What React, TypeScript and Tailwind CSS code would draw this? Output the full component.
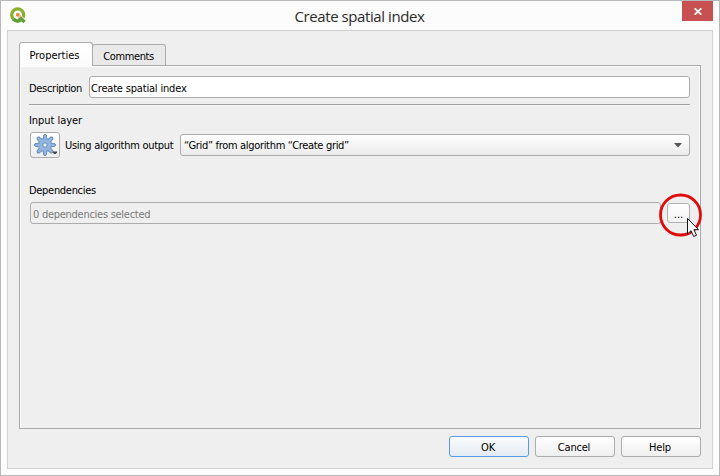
import type { ReactNode } from "react";

function Logo() {
  return (
    <svg width="18" height="18" viewBox="0 0 18 18" className="shrink-0">
      <circle cx="7.7" cy="7.9" r="6" fill="none" stroke="#86b02c" strokeWidth="3.2" />
      <path d="M3.4 12.2A6 6 0 0 0 10 13.5" fill="none" stroke="#5b9d38" strokeWidth="3.2" />
      <path d="M10.4 8.8L15.6 13.6" stroke="#fcfcfc" strokeWidth="1.4" />
      <path d="M9.3 10L14.6 15" stroke="#63a03a" strokeWidth="3.4" />
      <path d="M6 6.2H9.3L11.4 9.3L9.4 11L6 9Z" fill="#f8b878" />
      <path d="M6.4 6.5H9V9H6.4Z" fill="#ee7a35" />
    </svg>
  );
}

const teeth = [0, 45, 90, 135, 180, 225, 270, 315];

function Gear() {
  return (
    <svg width="24" height="24" viewBox="0 0 24 24">
      {teeth.map((a) => (
        <path key={a} d="M10.2 6L10.6 2.2Q12 .5 13.4 2.2L13.8 6" transform={`rotate(${a} 12 12)`} fill="#92b5df" stroke="#6089b9" strokeWidth="1" />
      ))}
      <circle cx="12" cy="12" r="6.4" fill="#92b5df" stroke="#6089b9" strokeWidth="0.9" />
      {teeth.map((a) => (
        <path key={a} d="M10.8 7V2.7H13.2V7Z" transform={`rotate(${a} 12 12)`} fill="#92b5df" />
      ))}
      <circle cx="12" cy="12" r="2.2" fill="#f0f3f7" stroke="#6089b9" strokeWidth="1" />
      <path d="M19.5 18.5H24V19.5L22.8 21H21Z" fill="#444" />
    </svg>
  );
}

function DialogButton({ children, primary }: { children: ReactNode; primary?: boolean }) {
  return (
    <button
      className={
        "flex h-[21px] w-20 items-center justify-center rounded-[3px] border pt-[2px] pr-[2px] tracking-[-0.2px] " +
        (primary
          ? "border-[#569de5] bg-linear-to-b from-[#fbfcfd] to-[#e4ebf3]"
          : "border-[#acacac] bg-linear-to-b from-white to-[#efefef]")
      }
    >
      {children}
    </button>
  );
}

export default function App() {
  return (
    <div className="relative flex h-[476px] w-[720px] flex-col border border-[#b9b9b9] bg-[#fcfcfc] px-1.5 pb-1.5 font-['DejaVu_Sans_Condensed','DejaVu_Sans',sans-serif] text-[11px] leading-[14px] text-black [font-stretch:condensed]">
      <header className="flex h-[29px] shrink-0 items-start">
        <div className="w-[30px] pt-1.5 pl-[3px]"><Logo /></div>
        <h1 className="flex-1 pt-[5px] text-center font-['Open_Sans',sans-serif] text-[15px] leading-5 tracking-[-0.42px] text-[#2b2b2b] [font-stretch:normal]">
          Create spatial index
        </h1>
        <button className="flex h-5 w-[31px] items-center justify-center bg-[#c75050]">
          <svg width="8" height="7" viewBox="0 0 8 7"><path d="M.7 .3L7.3 6.7M7.3 .3L.7 6.7" stroke="white" strokeWidth="1.7" /></svg>
        </button>
      </header>

      <main className="flex flex-1 flex-col border border-[#d2d2d2] bg-[#efefef] px-[11px] pt-[11px] pb-[11px]">
        <div className="z-10 -mb-px flex h-6 shrink-0 items-end">
          <div className="flex h-6 w-[74px] justify-center rounded-t-[3px] border border-b-0 border-[#acacac] bg-linear-to-b from-white to-[#fbfbfb] pt-1.5 pr-[3px]">Properties</div>
          <div className="mb-px -ml-px flex h-[21px] w-[74px] justify-center rounded-t-[3px] border border-b-0 border-[#acacac] bg-[#e9e9e9] pt-[5px] pr-px tracking-[-0.38px]">Comments</div>
        </div>

        <section className="flex h-[364px] w-[682px] shrink-0 flex-col border border-[#a9a9a9] pt-2.5 pr-2.5 pl-[9px] shadow-[inset_1px_1px_0_#fcfcfc,inset_-1px_0_0_#fcfcfc]">
          <div className="flex h-[22px] items-center">
            <label className="w-[60px] pt-[3px] tracking-[-0.3px]">Description</label>
            <div className="flex h-[22px] flex-1 items-center rounded-[3px] border border-[#acacac] bg-white pt-[3px] pl-px tracking-[-0.18px]">Create spatial index</div>
          </div>
          <div className="mt-1.5 h-px bg-[#a0a0a0] shadow-[0_1px_0_#f8f8f8]" />

          <div className="mt-2 h-[14px] pt-px tracking-[-0.05px]">Input layer</div>
          <div className="mt-[5px] flex h-[26px] items-center">
            <button className="ml-px flex h-[26px] w-[30px] shrink-0 items-center justify-center rounded-[3px] border border-[#acacac] bg-linear-to-b from-white to-[#eeeeee]"><Gear /></button>
            <span className="ml-[5px] w-[115px] pt-[2px] tracking-[-0.27px] whitespace-nowrap">Using algorithm output</span>
            <div className="flex h-[22px] flex-1 items-center justify-between rounded-[3px] border border-[#acacac] bg-linear-to-b from-white to-[#ebebeb] pr-[7px] pl-[3px] tracking-[-0.32px]">
              <span className="pt-[2px]">“Grid” from algorithm “Create grid”</span>
              <svg width="8" height="5" viewBox="0 0 8 5"><path d="M0 0H8L4 4.5Z" fill="#555" /></svg>
            </div>
          </div>

          <div className="mt-6 h-[14px] pt-[2px] tracking-[-0.3px]">Dependencies</div>
          <div className="mt-[6px] flex h-[22px] items-center justify-between">
            <div className="ml-px flex h-[22px] w-[631px] items-center rounded-[3px] border border-[#acacac] pt-[3px] pl-[2px] tracking-[-0.27px] text-[#7b7b7b]">0 dependencies selected</div>
            <button className="flex h-5 w-[23px] items-center justify-center rounded-[3px] border border-[#b0b0b0] bg-linear-to-b from-white to-[#f2f2f2] pt-[3px]">...</button>
          </div>
        </section>

        <footer className="mt-[7px] flex justify-end gap-1.5">
          <DialogButton primary>OK</DialogButton>
          <DialogButton>Cancel</DialogButton>
          <DialogButton>Help</DialogButton>
        </footer>
      </main>

      <svg className="absolute top-[191px] left-[657px]" width="46" height="48" viewBox="0 0 46 48">
        <circle cx="22.5" cy="23" r="20" fill="none" stroke="#e00b0b" strokeWidth="2.8" />
        <path d="M29.5 26.5V42L33 38.7L35.7 44.5L38.5 43.3L35.9 37.7H40.5Z" fill="white" stroke="#151515" strokeWidth="1" />
      </svg>
    </div>
  );
}
